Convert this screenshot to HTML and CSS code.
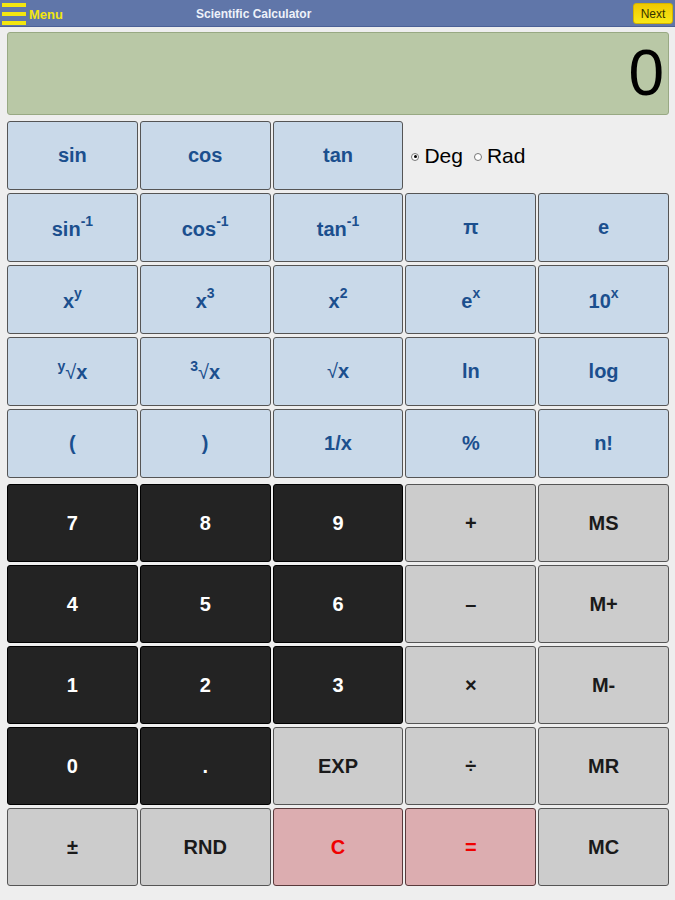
FILE: index.html
```html
<!DOCTYPE html>
<html>
<head>
<meta charset="utf-8">
<link rel="stylesheet" href="styles.css">
</head>
<body>
<div class="topbar">
  <div class="burger"><span></span><span></span><span></span></div>
  <div class="menu">Menu</div>
  <div class="title">Scientific Calculator</div>
  <div class="next">Next</div>
</div>
<div class="main">
  <div class="display">0</div>
  <div class="sci">
    <div class="key s"><span>sin</span></div>
    <div class="key s"><span>cos</span></div>
    <div class="key s"><span>tan</span></div>
    <div class="mode">
      <span class="radio on"></span><span class="lbl">Deg</span>
      <span class="radio"></span><span class="lbl">Rad</span>
    </div>
    <div class="key s"><span>sin<sup>-1</sup></span></div>
    <div class="key s"><span>cos<sup>-1</sup></span></div>
    <div class="key s"><span>tan<sup>-1</sup></span></div>
    <div class="key s"><span>π</span></div>
    <div class="key s"><span>e</span></div>
    <div class="key s"><span>x<sup>y</sup></span></div>
    <div class="key s"><span>x<sup>3</sup></span></div>
    <div class="key s"><span>x<sup>2</sup></span></div>
    <div class="key s"><span>e<sup>x</sup></span></div>
    <div class="key s"><span>10<sup>x</sup></span></div>
    <div class="key s"><span><sup class="pre">y</sup><span class="rad">√</span>x</span></div>
    <div class="key s"><span><sup class="pre">3</sup><span class="rad">√</span>x</span></div>
    <div class="key s"><span><span class="rad">√</span>x</span></div>
    <div class="key s"><span>ln</span></div>
    <div class="key s"><span>log</span></div>
    <div class="key s"><span>(</span></div>
    <div class="key s"><span>)</span></div>
    <div class="key s"><span>1/x</span></div>
    <div class="key s"><span>%</span></div>
    <div class="key s"><span>n!</span></div>
  </div>
  <div class="num">
    <div class="key d">7</div>
    <div class="key d">8</div>
    <div class="key d">9</div>
    <div class="key g">+</div>
    <div class="key g">MS</div>
    <div class="key d">4</div>
    <div class="key d">5</div>
    <div class="key d">6</div>
    <div class="key g">–</div>
    <div class="key g">M+</div>
    <div class="key d">1</div>
    <div class="key d">2</div>
    <div class="key d">3</div>
    <div class="key g">×</div>
    <div class="key g">M-</div>
    <div class="key d">0</div>
    <div class="key d">.</div>
    <div class="key g">EXP</div>
    <div class="key g">÷</div>
    <div class="key g">MR</div>
    <div class="key g">±</div>
    <div class="key g">RND</div>
    <div class="key p">C</div>
    <div class="key p">=</div>
    <div class="key g">MC</div>
  </div>
</div>
</body>
</html>
```
FILE: styles.css
```css
html, body {
  margin: 0;
  padding: 0;
  background: #eeeeee;
  font-family: "Liberation Sans", Arial, sans-serif;
}
.topbar {
  height: 26px;
  background: #6076a9;
  border-bottom: 1px solid #4b6096;
  display: flex;
  align-items: center;
  position: relative;
}
.burger {
  width: 24px;
  margin-left: 2px;
  display: flex;
  flex-direction: column;
  gap: 5px;
  margin-top: 1px;
}
.burger span {
  display: block;
  height: 4px;
  background: #f3e60f;
}
.menu {
  margin-left: 3px;
  color: #f3e60f;
  font-weight: bold;
  font-size: 13px;
  margin-top: 2px;
}
.title {
  margin-left: 133px;
  color: #eef2fa;
  font-weight: bold;
  font-size: 12px;
  margin-top: 2px;
}
.next {
  margin-left: auto;
  margin-right: 2px;
  width: 38px;
  height: 19px;
  border: 1px solid #d4b400;
  border-radius: 3px;
  background: linear-gradient(#f0c800, #f8e818);
  color: #333300;
  font-size: 12px;
  display: flex;
  align-items: center;
  justify-content: center;
  margin-top: 1px;
}
.main {
  padding: 5px 6px 0 7px;
}
.display {
  height: 81px;
  background: #b9c8a6;
  border: 1px solid #98a983;
  border-radius: 3px;
  font-size: 64px;
  color: #000;
  text-align: right;
  line-height: 81px;
  padding-right: 4px;
}
.sci {
  margin-top: 6px;
  display: grid;
  grid-template-columns: repeat(5, 1fr);
  grid-auto-rows: 69px;
  gap: 3px 2px;
}
.num {
  margin-top: 6px;
  display: grid;
  grid-template-columns: repeat(5, 1fr);
  grid-auto-rows: 78px;
  gap: 3px 2px;
}
.key {
  box-sizing: border-box;
  border: 1px solid #555;
  border-radius: 3px;
  display: flex;
  align-items: center;
  justify-content: center;
  font-weight: bold;
  font-size: 20px;
}
.key sup {
  font-size: 14px;
  line-height: 1;
  vertical-align: 10px;
}
.key sup.pre {
  vertical-align: 8px;
}
.rad {
  font-weight: normal;
}
.s {
  background: #c9d9e9;
  color: #1b4f8e;
}
.d {
  background: #232323;
  border-color: #000;
  color: #fff;
}
.g {
  background: #cccccc;
  color: #1a1a1a;
}
.p {
  background: #dcadb0;
  color: #f00000;
  border-color: #5a3a3c;
}
.mode {
  grid-column: span 2;
  display: flex;
  align-items: center;
  padding-left: 6px;
  font-size: 21px;
  color: #000;
}
.radio {
  box-sizing: border-box;
  width: 8px;
  height: 8px;
  border: 1px solid #777;
  border-radius: 50%;
  background: #fff;
  margin-right: 5px;
  position: relative;
  margin-top: 2px;
}
.radio.on::after {
  content: "";
  position: absolute;
  left: 1.5px;
  top: 1.5px;
  width: 3px;
  height: 3px;
  border-radius: 50%;
  background: #000;
}
.lbl {
  margin-right: 11px;
}
```
